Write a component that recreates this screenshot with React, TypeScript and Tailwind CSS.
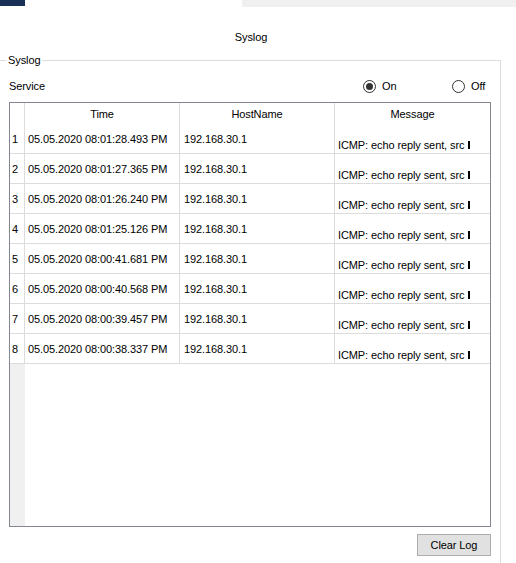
const logRows = [
  "05.05.2020 08:01:28.493 PM",
  "05.05.2020 08:01:27.365 PM",
  "05.05.2020 08:01:26.240 PM",
  "05.05.2020 08:01:25.126 PM",
  "05.05.2020 08:00:41.681 PM",
  "05.05.2020 08:00:40.568 PM",
  "05.05.2020 08:00:39.457 PM",
  "05.05.2020 08:00:38.337 PM",
];

function Radio({ label, checked }: { label: string; checked?: boolean }) {
  return (
    <span className="flex items-center gap-[6px]">
      <span className="flex h-[13px] w-[13px] items-center justify-center rounded-full border border-[#333] bg-white">
        {checked && <span className="h-[7px] w-[7px] rounded-full bg-[#333]" />}
      </span>
      <span>{label}</span>
    </span>
  );
}

export default function App() {
  return (
    <div className="h-[563px] w-[516px] overflow-hidden whitespace-nowrap bg-white font-['Liberation_Sans',Arial,sans-serif] text-[11px] leading-4 tracking-[-0.1px] text-black">
      {/* top strip of the parent window */}
      <div className="flex h-[7px]">
        <div className="h-[6px] w-[25px] bg-[#1a3057]" />
        <div className="ml-auto w-[274px] bg-[#f0f0f0]" />
      </div>

      <div className="mt-[22px] w-[502px] text-center">Syslog</div>

      <fieldset className="mt-[7px] w-[501px] border-t border-r border-[#dcdcdc] pb-[20px]">
        <legend className="ml-[6px] px-[2px] leading-4">Syslog</legend>
        <div className="px-[9px]">
          <div className="mt-[10px] flex h-4 items-center">
            <span className="w-[354px]">Service</span>
            <span className="w-[89px]">
              <Radio label="On" checked />
            </span>
            <Radio label="Off" />
          </div>

          <div className="mt-[8px] flex h-[425px] w-[482px] flex-col border border-[#828790]">
            <div className="flex h-[21px] shrink-0 items-center">
              <div className="h-full w-[15px] border-r border-[#dcdcdc]" />
              <div className="flex h-full w-[155px] items-center justify-center border-r border-[#dcdcdc]">Time</div>
              <div className="flex h-full w-[155px] items-center justify-center border-r border-[#dcdcdc]">HostName</div>
              <div className="flex h-full flex-1 items-center justify-center">Message</div>
            </div>

            {logRows.map((time, i) => (
              <div key={time} className="flex h-[30px] shrink-0 border-b border-[#dcdcdc]">
                <div className="flex w-[15px] items-center border-r border-[#dcdcdc] pl-[2px] pt-[1px]">{i + 1}</div>
                <div className="flex w-[155px] items-center border-r border-[#dcdcdc] pl-[3px] pt-[1px]">{time}</div>
                <div className="flex w-[155px] items-center border-r border-[#dcdcdc] pl-[4px] pt-[1px]">192.168.30.1</div>
                <div className="flex flex-1 items-end overflow-hidden pl-[3px]">
                  <span>ICMP: echo reply sent, src</span>
                  <span className="mb-[4px] ml-[4px] inline-block h-[8px] w-[2px] bg-black" />
                </div>
              </div>
            ))}

            <div className="flex flex-1">
              <div className="w-[15px] bg-[#f0f0f0]" />
            </div>
          </div>

          <div className="mt-[7px] flex justify-end">
            <button className="h-[22px] w-[74px] border border-[#adadad] bg-[#e1e1e1]">Clear Log</button>
          </div>
        </div>
      </fieldset>
    </div>
  );
}
